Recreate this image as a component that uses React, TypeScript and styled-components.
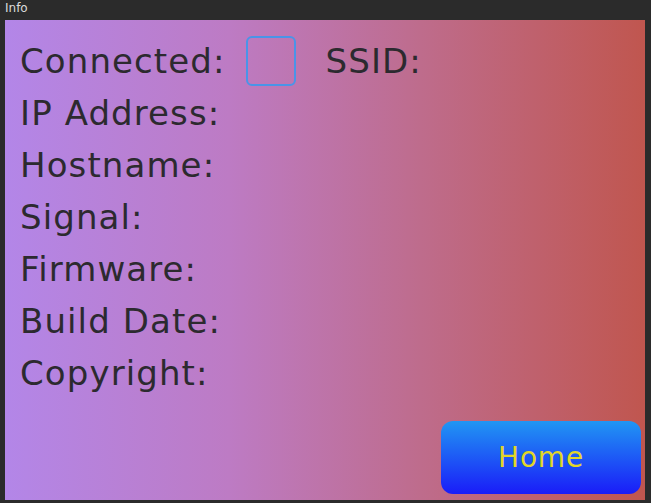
import styled, { createGlobalStyle } from 'styled-components';

const GlobalStyle = createGlobalStyle`
    html, body {
        margin: 0;
        padding: 0;
        background: #2b2b2b;
    }
`;

const Window = styled.div`
    width: 651px;
    height: 503px;
    display: flex;
    flex-direction: column;
    background: #2b2b2b;
    box-sizing: border-box;
    padding: 0 6px 3px 5px;
`;

const TitleBar = styled.div`
    height: 20px;
    flex-shrink: 0;
    font-family: "DejaVu Sans", sans-serif;
    font-size: 12px;
    line-height: 16px;
    color: #dcdcdc;
`;

const Panel = styled.div`
    flex: 1;
    display: flex;
    flex-direction: column;
    padding: 15px 4px 6px 15px;
    box-sizing: border-box;
    background: linear-gradient(90deg, #b386e8 0%, #bd7bc4 35%, #be6c8c 65%, #c0564f 100%);
`;

const Row = styled.div`
    display: flex;
    align-items: center;
    height: 52px;
    gap: 20px;
`;

const Label = styled.span<{ $gap?: number }>`
    font-family: "DejaVu Sans", sans-serif;
    font-size: 34px;
    letter-spacing: 1.1px;
    color: #2c2a2f;
    margin-left: ${p => p.$gap ?? 0}px;
    white-space: nowrap;
`;

const CheckBox = styled.div`
    width: 50px;
    height: 50px;
    box-sizing: border-box;
    border: 2px solid #4a94e8;
    border-radius: 6px;
`;

const Footer = styled.div`
    margin-top: auto;
    display: flex;
    justify-content: flex-end;
`;

const HomeButton = styled.button`
    width: 200px;
    height: 73px;
    border: none;
    border-radius: 12px;
    background: linear-gradient(180deg, #2196f3 0%, #1a1cf8 100%);
    font-family: "DejaVu Sans", sans-serif;
    font-size: 28px;
    letter-spacing: 0.8px;
    color: #e2d628;
    cursor: pointer;
`;

const labels = ['IP Address:', 'Hostname:', 'Signal:', 'Firmware:', 'Build Date:', 'Copyright:'];

export default function App() {
    return (
        <>
            <GlobalStyle />
            <Window>
                <TitleBar>Info</TitleBar>
                <Panel>
                    <Row>
                        <Label>Connected:</Label>
                        <CheckBox />
                        <Label $gap={10}>SSID:</Label>
                    </Row>
                    {labels.map(l => (
                        <Row key={l}>
                            <Label>{l}</Label>
                        </Row>
                    ))}
                    <Footer>
                        <HomeButton>Home</HomeButton>
                    </Footer>
                </Panel>
            </Window>
        </>
    );
}
